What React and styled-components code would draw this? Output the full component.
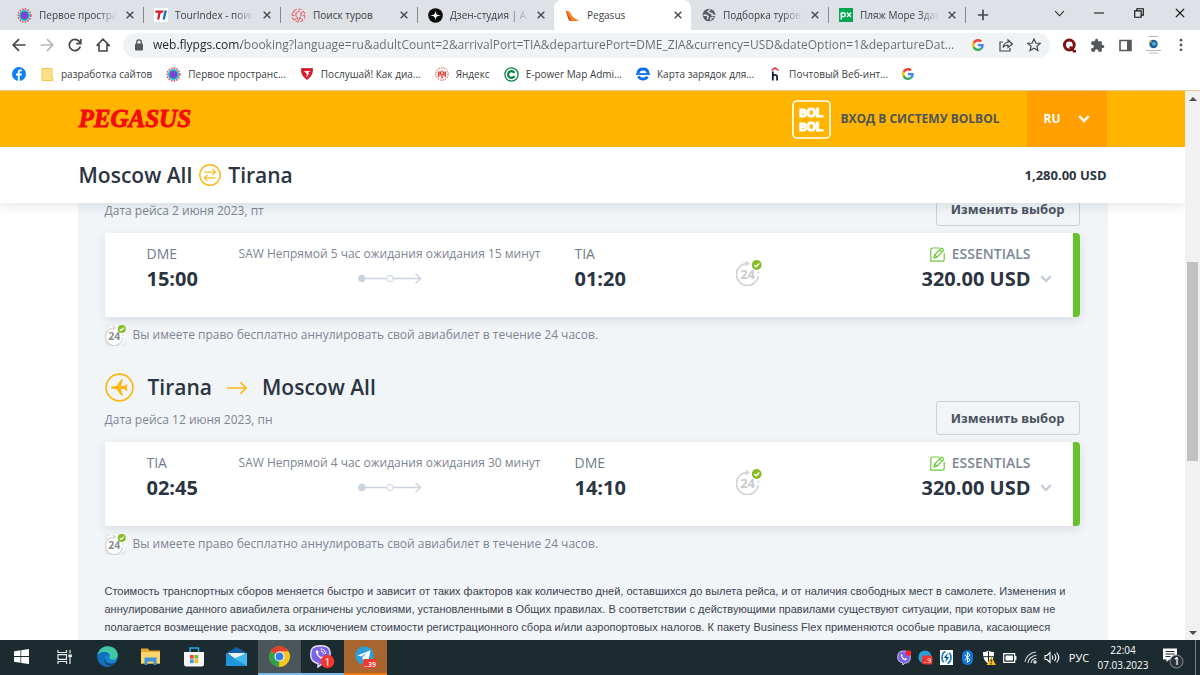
import React from "react";
import styled, { createGlobalStyle } from "styled-components";

const ui = '"Open Sans", "Noto Sans", sans-serif';
const site = '"Open Sans", "Noto Sans", sans-serif';

const GlobalStyle = createGlobalStyle`
  *, *::before, *::after { box-sizing: border-box; }
  html, body { margin: 0; height: 100%; overflow: hidden; }
  body { font-family: ${site}; background: #fff; color: #2b3542; }
  #root { height: 100%; }
  button, input, select { font: inherit; color: inherit; border: 0; background: none; padding: 0; margin: 0; }
  button { cursor: pointer; }
  a { color: inherit; text-decoration: none; }
  svg { display: block; flex: none; }
  h1, h2, p { margin: 0; }
`;

const Desktop = styled.div`
  display: flex;
  flex-direction: column;
  height: 100vh;
`;

/* ---------- browser frame ---------- */

const TabStrip = styled.div`
  display: flex;
  align-items: stretch;
  height: 30px;
  padding-left: 6px;
  background: #dee1e6;
  font: 10px/16px ${ui};
  color: #3c4043;
`;

const Tab = styled.div`
  display: flex;
  align-items: center;
  gap: 7px;
  flex: 0 1 137px;
  min-width: 0;
  padding: 0 7px 0 11px;
  border-radius: 8px 8px 0 0;
  background: ${(p) => (p.$active ? "#fff" : "transparent")};
  position: relative;
  &::after {
    content: "";
    position: absolute;
    right: -1px;
    top: 7px;
    width: 1px;
    height: 16px;
    background: ${(p) => (p.$divided ? "#84888d" : "transparent")};
  }
`;

const TabTitle = styled.span`
  flex: 1;
  min-width: 0;
  overflow: hidden;
  white-space: nowrap;
  mask-image: ${(p) => (p.$fade ? "linear-gradient(to right, #000 75%, transparent)" : "none")};
`;

const IconButton = styled.button`
  display: grid;
  place-items: center;
  flex: none;
  width: ${(p) => p.$w || 28}px;
  height: ${(p) => p.$h || 28}px;
  color: ${(p) => p.$color || "#45494d"};
`;

const WindowControls = styled.div`
  display: flex;
  margin-left: auto;
  height: 26px;
`;

const Toolbar = styled.div`
  display: flex;
  align-items: center;
  height: 30px;
  padding: 0 5px;
  background: #fff;
`;

const Omnibox = styled.label`
  display: flex;
  align-items: center;
  flex: 1;
  min-width: 0;
  height: 25px;
  margin: 0 5px 0 6px;
  padding: 0 2px 0 11px;
  gap: 9px;
  border-radius: 13px;
  background: #f0f3f5;
`;

const UrlInput = styled.input`
  flex: 1;
  min-width: 0;
  height: 20px;
  font: 12px/20px ${ui};
  outline: 0;
  text-overflow: ellipsis;
  color: transparent;
  background: linear-gradient(to right, #202124 88px, #676b70 88px);
  background-clip: text;
  -webkit-background-clip: text;
`;

const OmniboxActions = styled.div`
  display: flex;
`;

const Bookmarks = styled.nav`
  display: flex;
  align-items: center;
  height: 30px;
  padding: 0 12px 2px;
  gap: 14px;
  background: #fff;
  font: 10px/16px ${ui};
  color: #3c4043;
`;

const Bookmark = styled.a`
  display: flex;
  align-items: center;
  gap: 7px;
  white-space: nowrap;
`;

/* ---------- site ---------- */

const Viewport = styled.div`
  display: flex;
  flex: 1;
  min-height: 0;
  border-top: 1px solid #e3c98c;
`;

const Page = styled.div`
  flex: 1;
  min-width: 0;
  overflow: hidden;
`;

const StickyTop = styled.header`
  position: relative;
  z-index: 2;
  box-shadow: 0 2px 12px rgba(40, 60, 80, 0.14);
`;

const Container = styled.div`
  display: flex;
  align-items: center;
  width: 100%;
  max-width: 1028px;
  height: 56px;
  margin: 0 auto;
`;

const BrandBar = styled.div`
  background: #ffb400;
`;

const RouteBar = styled.div`
  background: #fff;
`;

const Brand = styled.a`
  font: italic 700 25px/30px "Liberation Serif", serif;
  color: #f40c0c;
  -webkit-text-stroke: 1px #f40c0c;
`;

const LoginLink = styled.a`
  display: flex;
  align-items: center;
  gap: 9px;
  margin-left: auto;
  font-size: 12px;
  line-height: 18px;
  font-weight: 700;
  color: #4d5357;
`;

const LanguageBox = styled.label`
  display: flex;
  align-items: center;
  justify-content: space-between;
  width: 80px;
  height: 56px;
  margin-left: 27px;
  padding: 0 17px;
  background: #ffa000;
  color: #fff;
`;

const LanguageSelect = styled.select`
  appearance: none;
  width: 24px;
  font-size: 12px;
  line-height: 18px;
  font-weight: 700;
  color: #fff;
  outline: 0;
`;

const Route = styled.h1`
  display: flex;
  align-items: center;
  gap: 7px;
  font-size: 21px;
  line-height: 28px;
  font-weight: 600;
  color: #2b3542;
`;

const Total = styled.strong`
  margin-left: auto;
  font-size: 13px;
  line-height: 20px;
  font-weight: 700;
`;

const Panel = styled.main`
  width: 100%;
  max-width: 1030px;
  margin: -11px auto 0;
  padding: 0 28px 24px 27px;
  background: #f1f5f8;
`;

const Leg = styled.section`
  display: flex;
  flex-direction: column;
  margin-bottom: 28px;
`;

const LegTop = styled.div`
  display: flex;
  align-items: flex-end;
  justify-content: space-between;
  margin-bottom: 7px;
`;

const LegTitle = styled.h2`
  display: flex;
  align-items: center;
  gap: 14px;
  height: 29px;
  margin-bottom: 8px;
  font-size: 21px;
  line-height: 29px;
  font-weight: 600;
`;

const LegDate = styled.p`
  padding-bottom: 5px;
  font-size: 12px;
  line-height: 20px;
  color: #7d8592;
`;

const ChangeButton = styled.button`
  height: 34px;
  padding: 0 14px;
  border: 1px solid #c9d1da;
  border-radius: 3px;
  font-family: "Noto Sans", "Open Sans", sans-serif;
  font-size: 13px;
  line-height: 20px;
  font-weight: 700;
  color: #4b545f;
`;

const Card = styled.article`
  display: grid;
  grid-template-columns: 88fr 340fr 161fr 337fr;
  height: 84px;
  padding: 11px 0 0 42px;
  border-right: 7px solid #66c32e;
  border-radius: 0 4px 4px 0;
  background: #fff;
  box-shadow: 0 3px 10px rgba(40, 60, 80, 0.12);
`;

const Airport = styled.div`
  font-size: 14px;
  line-height: 20px;
  color: #717b8a;
`;

const Time = styled.div`
  font-size: 20px;
  line-height: 30px;
  font-weight: 700;
  color: #2b3542;
`;

const Stops = styled.div`
  display: flex;
  flex-direction: column;
  align-items: center;
  gap: 9px;
  width: 310px;
  font-size: 12px;
  line-height: 20px;
  white-space: nowrap;
  color: #7d8592;
`;

const Fare = styled.div`
  display: flex;
  justify-content: space-between;
  padding-right: 21px;
`;

const Refund = styled.div`
  padding-top: 16px;
`;

const FarePrice = styled.div`
  display: flex;
  gap: 9px;
  text-align: right;
`;

const FareName = styled.div`
  display: flex;
  align-items: center;
  justify-content: flex-end;
  gap: 7px;
  font-size: 14px;
  line-height: 20px;
  font-weight: 600;
  color: #7c8695;
`;

const FareToggle = styled.button`
  align-self: flex-start;
  display: grid;
  place-items: center;
  width: 12px;
  height: 30px;
  margin-top: 20px;
  color: #c6ced9;
`;

const Note = styled.p`
  display: flex;
  align-items: center;
  gap: 7px;
  height: 20px;
  margin-top: 8px;
  font-size: 12px;
  line-height: 20px;
  color: #7d8592;
`;

const Terms = styled.p`
  font: 11px/18px "Liberation Sans", "Open Sans", sans-serif;
  white-space: nowrap;
  color: #3a434e;
`;

const Scrollbar = styled.div`
  display: grid;
  grid-template-rows: 15px 156fr 199fr 164fr 15px;
  justify-items: center;
  align-items: center;
  width: 15px;
  background: #f1f1f1;
`;

const Thumb = styled.div`
  grid-row: 3;
  width: 11px;
  height: 100%;
  background: #c1c1c1;
`;

const ScrollArrow = styled.div`
  grid-row: ${(p) => (p.$down ? 5 : 1)};
  border: 4px solid transparent;
  border-top: ${(p) => (p.$down ? "4px solid #505050" : "0")};
  border-bottom: ${(p) => (p.$down ? "0" : "4px solid #505050")};
`;

/* ---------- taskbar ---------- */

const Taskbar = styled.footer`
  display: flex;
  align-items: stretch;
  justify-content: space-between;
  height: 35px;
  flex: none;
  background: #1b2b30;
  color: #fff;
  font: 11px/16px ${ui};
`;

const TaskGroup = styled.div`
  display: flex;
`;

const TaskButton = styled.button`
  display: grid;
  place-items: center;
  width: 43px;
  background: ${(p) => p.$bg || "transparent"};
  border-bottom: 2px solid ${(p) => p.$line || "transparent"};
`;

const Tray = styled.div`
  display: flex;
  align-items: center;
  padding-right: 4px;
`;

const TrayButton = styled.button`
  display: grid;
  place-items: center;
  width: 21px;
  height: 35px;
`;

const Lang = styled.button`
  width: 34px;
  color: #fff;
`;

const Clock = styled.button`
  width: 54px;
  color: #fff;
  font-size: 10px;
  line-height: 15px;
  white-space: nowrap;
`;

const Notices = styled.button`
  display: grid;
  place-items: center;
  width: 46px;
  height: 35px;
  border-right: 1px solid #75808a;
`;

/* ---------- icons ---------- */

const Orbit = () => (
  <svg width="15" height="15" viewBox="0 0 15 15">
    <circle cx="7.5" cy="7.5" r="6.4" fill="#d9f3f2" stroke="#e5455f" strokeWidth="1.5" strokeDasharray="1.5 1.2" />
    <circle cx="7.5" cy="7.5" r="5.4" fill="#28b7bd" />
    <circle cx="7.5" cy="7.5" r="3.7" fill="#7a45d6" />
  </svg>
);

const TourIndex = () => (
  <svg width="14" height="14" viewBox="0 0 14 14">
    <rect width="14" height="14" fill="#fff" />
    <path d="M1.600 2.500h8l-.5 2.200H6.800L5.300 11.500H3L4.500 4.700H1.100z" fill="#d8182a" />
    <path d="M10.500 2.500h2.400l-2 9H8.500z" fill="#1574c4" />
  </svg>
);

const Tours = () => (
  <svg width="15" height="15" viewBox="0 0 15 15" fill="none" stroke="#ea646c" strokeWidth="1.100">
    <circle cx="7.500" cy="7.500" r="6.500" strokeDasharray="3 2" />
    <path d="M2 3l3 2.500L7.500 3 10 5.500 13 3M1 7l3.500 1M14 7l-3.500 1M3 12l3-2 1.500 3L9 10l3 2M5 5.500v3l2.500 2L10 8.500v-3" strokeDasharray="2.500 .7" />
  </svg>
);

const Zen = () => (
  <svg width="15" height="15" viewBox="0 0 15 15">
    <circle cx="7.500" cy="7.500" r="7.300" fill="#0b0b0b" />
    <path d="M7.500 2c.2 4 1.300 5.300 5.500 5.500C8.800 7.700 7.700 9 7.500 13 7.300 9 6.200 7.700 2 7.500 6.200 7.300 7.300 6 7.500 2z" fill="#fff" />
  </svg>
);

const Wing = () => (
  <svg width="15" height="15" viewBox="0 0 15 15">
    <path d="M.5 2.200C2 3 4 2.800 5 4.500c1.500 2.700 3 6 9.500 8-3.500.9-7.500 1-9.500.3C2.500 11 2 5.500.5 2.200z" fill="#f58220" />
    <path d="M.5 2.200C3 5 3.500 9 6.500 13c-1 0-2-.2-2.500-1C2.500 9.500 2 5 .5 2.200z" fill="#c4461c" />
  </svg>
);

const Globe = () => (
  <svg width="14" height="14" viewBox="0 0 14 14">
    <circle cx="7" cy="7" r="6.300" fill="#5a5e63" />
    <path d="M1.500 7.300h3l1.700 1.500-1 2.500M8.500 1.500L6 3.300l1.500 1.500 2.500.7v1.700h3M8.500 12.500l.5-2.500 2.500-.8" stroke="#dee1e6" strokeWidth="1.400" fill="none" />
  </svg>
);

const Px = () => (
  <svg width="14" height="14" viewBox="0 0 14 14">
    <rect width="14" height="14" fill="#00a651" />
    <g fill="none" stroke="#fff" strokeWidth="1.400">
      <path d="M2.300 11.500V4.500" />
      <circle cx="4.300" cy="6.700" r="1.900" />
      <path d="M8 4.500l4 4.600M12 4.500L8 9.100" />
    </g>
  </svg>
);

const GoogleG = () => (
  <svg width="12" height="12" viewBox="0 0 48 48">
    <path fill="#EA4335" d="M24 9.500c3.540 0 6.710 1.220 9.210 3.600l6.850-6.850C35.900 2.380 30.470 0 24 0 14.620 0 6.510 5.380 2.560 13.220l7.980 6.190C12.430 13.720 17.740 9.500 24 9.500z" />
    <path fill="#4285F4" d="M46.980 24.550c0-1.570-.15-3.090-.38-4.550H24v9.020h12.940c-.58 2.960-2.260 5.480-4.780 7.180l7.730 6c4.510-4.180 7.090-10.360 7.090-17.650z" />
    <path fill="#FBBC05" d="M10.530 28.590c-.48-1.450-.76-2.990-.76-4.590s.27-3.140.76-4.590l-7.980-6.190C.92 16.460 0 20.120 0 24c0 3.880.92 7.540 2.560 10.780l7.970-6.190z" />
    <path fill="#34A853" d="M24 48c6.480 0 11.930-2.130 15.890-5.810l-7.730-6c-2.150 1.450-4.920 2.300-8.160 2.300-6.260 0-11.570-4.220-13.470-9.910l-7.980 6.190C6.510 42.620 14.620 48 24 48z" />
  </svg>
);

const Cross = ({ size = 8, weight = 1.4 }) => (
  <svg width={size} height={size} viewBox="0 0 8 8" stroke="currentColor" strokeWidth={weight}>
    <path d="M.7.7l6.600 6.600M7.300.7L.7 7.300" />
  </svg>
);

const Line = ({ size = 14, d, w = 1.5 }) => (
  <svg width={size} height={size} viewBox="0 0 14 14" fill="none" stroke="currentColor" strokeWidth={w}>
    <path d={d} />
  </svg>
);

const Facebook = () => (
  <svg width="14" height="14" viewBox="0 0 14 14">
    <circle cx="7" cy="7" r="7" fill="#0f7ff2" />
    <path d="M7.700 14V8.500h1.900l.3-2H7.700V5.300c0-.7.400-1.100 1.100-1.100h1.100V2.500C8 2.200 5.800 2.300 5.800 5v1.500H4v2h1.800V14z" fill="#fff" />
  </svg>
);

const Folder = () => (
  <svg width="14" height="14" viewBox="0 0 14 14">
    <path d="M2 1.500h10v9h1v3H2z" fill="#ffe08a" stroke="#f2c752" />
  </svg>
);

const Shield = () => (
  <svg width="14" height="14" viewBox="0 0 14 14">
    <path d="M1.500 1.500h11c.5 4.500-1.500 8.500-5.500 11-4-2.500-6-6.500-5.500-11z" fill="#e3172b" stroke="#8f1622" strokeWidth=".6" />
    <path d="M4 4h6.500L8 5.700l1 .5-2.500 4.500.2-4z" fill="#fff" />
  </svg>
);

const RedStamp = () => (
  <svg width="14" height="14" viewBox="0 0 14 14" fill="none" stroke="#e1372c">
    <circle cx="7" cy="7" r="6.200" strokeDasharray="1.500 1" />
    <path d="M3.700 4.500v5.500M10.300 4.500v5.500M7 3.500v2M7 6.500v5M5.300 4.500v4M8.700 4.500v4" strokeWidth="1.300" />
  </svg>
);

const GreenC = () => (
  <svg width="15" height="15" viewBox="0 0 15 15" fill="none" stroke="#0b8548">
    <circle cx="7.500" cy="7.500" r="6.600" strokeWidth="1.300" />
    <path d="M10.300 5.800A3.300 3.300 0 1 0 10.300 9.200" strokeWidth="2.300" />
  </svg>
);

const BlueE = () => (
  <svg width="14" height="14" viewBox="0 0 14 14" fill="none" stroke="#0c6fe8" strokeWidth="2.800">
    <path d="M2 6.200C2.300 3.500 4.300 2 7 2s4.800 1.600 5 4.200M2.400 9.300c.9 1.700 2.500 2.700 4.600 2.700 1.900 0 3.500-.8 4.500-2.300" />
    <path d="M0 7h14" strokeWidth="1.800" />
  </svg>
);

const HMail = () => (
  <svg width="14" height="14" viewBox="0 0 14 14" fill="none" strokeWidth="1.800">
    <path d="M3.500 3.300L7 1l3.500 2.300" stroke="#e8384f" strokeWidth="1.500" />
    <path d="M4.800 4.500v9M4.800 9.500c.4-2 4.300-2.300 4.300.3v3.700" stroke="#151c3d" />
  </svg>
);

const Puzzle = () => (
  <svg width="15" height="15" viewBox="0 0 24 24" fill="#54585d">
    <path d="M20.500 11H19V7c0-1.100-.9-2-2-2h-4V3.500a2.500 2.500 0 0 0-5 0V5H4a2 2 0 0 0-2 2v3.800h1.500a2.700 2.700 0 0 1 0 5.400H2V20c0 1.100.9 2 2 2h3.800v-1.500a2.700 2.700 0 0 1 5.400 0V22H17a2 2 0 0 0 2-2v-4h1.500a2.500 2.500 0 0 0 0-5z" />
  </svg>
);

const Quill = () => (
  <svg width="15" height="15" viewBox="0 0 15 15" fill="none" stroke="#7d1113" strokeWidth="3">
    <circle cx="7.300" cy="7" r="4.900" />
    <path d="M8 8.500l4 4.700h2" strokeWidth="2.400" />
  </svg>
);

const Profile = () => (
  <svg width="17" height="18" viewBox="0 0 17 18">
    <path d="M4 .5h9M1 14.500h15M4 17h9" stroke="#b4b8bc" />
    <circle cx="8.500" cy="8" r="4.200" fill="#1b5f96" />
    <circle cx="9" cy="7.700" r="2" fill="#48b5df" />
    <circle cx="5.500" cy="5.500" r="1.200" fill="#d4a25f" />
  </svg>
);

const BolBol = () => (
  <svg width="39" height="39" viewBox="0 0 39 39" fill="none">
    <rect x="1" y="1" width="37" height="37" rx="4" stroke="#fff" strokeWidth="1.600" />
    <g fill="#fff" stroke="#fff" strokeWidth="1.200" strokeLinejoin="round" fontFamily="Liberation Sans" fontWeight="700" fontSize="12" textAnchor="middle">
      <text x="19.500" y="17">
        <tspan fontSize="10">B</tspan>OL
      </text>
      <text x="19.500" y="31">
        <tspan fontSize="10">B</tspan>OL
      </text>
    </g>
  </svg>
);

const Chevron = () => (
  <svg width="12" height="8" viewBox="0 0 12 8" fill="none" stroke="currentColor" strokeWidth="2.400">
    <path d="M1.300 1.200L6 6l4.700-4.800" />
  </svg>
);

const RoundTrip = () => (
  <svg width="22" height="22" viewBox="0 0 22 22" fill="none" stroke="#fdb716" strokeWidth="1.200">
    <circle cx="11" cy="11" r="10.200" strokeWidth="1.400" />
    <path d="M5.500 8.200h11M13.500 5.200l3 3-3 3M16.500 13.800h-11M8.500 10.800l-3 3 3 3" />
  </svg>
);

const PlaneBadge = () => (
  <svg width="29" height="29" viewBox="0 0 29 29">
    <circle cx="14.500" cy="14.500" r="13.400" fill="none" stroke="#fdb716" strokeWidth="1.700" />
    <path d="M6 14.500c0-.8 1-1.300 2.300-1.300l3.100-.2L16 6.500h2L16 13h3.200l1.500-1.600h1.800l-.8 3.100.8 3.100h-1.800L19.200 16H16l2 6.500h-2L11.400 16l-3.100-.2c-1.300 0-2.300-.5-2.300-1.300z" fill="#fdb716" />
  </svg>
);

const LongArrow = () => (
  <svg width="22" height="14" viewBox="0 0 22 14" fill="none" stroke="#fdb716" strokeWidth="1.700">
    <path d="M1 7h19M14.500 1.300L20.200 7l-5.700 5.700" />
  </svg>
);

const StopLine = () => (
  <svg width="64" height="11" viewBox="0 0 64 11" fill="none" stroke="#cbd3df">
    <circle cx="3.800" cy="5.500" r="3.700" fill="#cbd3df" stroke="none" />
    <path d="M4 5.500h24.500M35 5.500h28" strokeWidth="1.300" />
    <circle cx="32" cy="5.500" r="3.100" />
    <path d="M57.500.8l5 4.700-5 4.700" strokeWidth="1.400" />
  </svg>
);

const Refund24 = ({ size = 26, plate = false }) => (
  <svg width={size} height={size} viewBox="0 0 26 26" fill="none">
    {plate && <rect width="26" height="26" fill="#e9ecee" />}
    {plate && <circle cx="13" cy="13" r="13" fill="#fff" />}
    <path d="M11.500 3.500A11 11 0 1 0 22.300 16M22.500 13.500a6 6 0 0 0-.2-2" stroke="#cfd1d3" strokeWidth="1.600" />
    <path d="M9.500 1.300l3.300 2.200-3 2.300" stroke="#cfd1d3" strokeWidth="1.400" />
    <text x="11.600" y="18.800" textAnchor="middle" fontFamily="Open Sans" fontSize="13" fontWeight="700" fill={plate ? "#8b8d90" : "#c9cbce"}>24</text>
    <circle cx="20.700" cy="5" r="4.900" fill="#85bd25" />
    <path d="M18.300 5l1.800 1.800 3.200-3.400" stroke="#fff" strokeWidth="1.400" />
  </svg>
);

const EditBox = () => (
  <svg width="15" height="15" viewBox="0 0 15 15" fill="none" stroke="#6bc93c" strokeWidth="1.200">
    <path d="M9.500 1H2.500A1.700 1.700 0 0 0 .8 2.700v11.500h11.500a1.900 1.900 0 0 0 1.900-1.900V6" />
    <path d="M4 11l.7-3.200 6.200-6.300c1.300-.9 3.200 1 2.300 2.300L7 10.200zM9.600 2.800l2.400 2.400M4.700 7.800L7 10.200" />
  </svg>
);

const Windows = () => (
  <svg width="15" height="15" viewBox="0 0 15 15" fill="#fff">
    <path d="M0 2.200l6.500-.9V7H0zM7.200 1.200L15 0v7H7.200zM0 7.900h6.500v5.800L0 12.800zM7.200 7.900H15V15l-7.800-1.100z" />
  </svg>
);

const TaskView = () => (
  <svg width="15" height="14" viewBox="0 0 15 14" fill="none" stroke="#e9ecee" strokeWidth="1.200">
    <path d="M1 0v2.500h8.500V0M1 14v-2.500h8.500V14M1 4.700h8.500v4.600H1zM13 0v3.500M13 7v7" />
    <path d="M12 5h2.300v1.500H12z" fill="#e9ecee" />
  </svg>
);

const Edge = () => (
  <svg width="21" height="21" viewBox="0 0 21 21">
    <circle cx="10.500" cy="10.500" r="10.300" fill="#1583cf" />
    <path d="M.5 9C2 3 6 .2 10.500.2c6.500 0 10.300 4.300 10.300 8.500 0 3.500-2.600 5-5 5-2.300 0-3.800-1-3.200-2.200C15 7 6 2.800.5 9z" fill="#3fc8a4" />
    <path d="M.5 9C4 5 11.500 5 12.800 9.500 9 7.500 6 11 7 14.500c1 3.500 4 5.500 7.500 5.500C7 22.500-.5 17.500.5 9z" fill="#1170bd" />
    <path d="M8 12c-.5 4.500 5 7.500 11 4-3 5-9.500 4.800-11.500 0-.6-1.500-.3-3 .5-4z" fill="#17466f" />
  </svg>
);

const Explorer = () => (
  <svg width="19" height="17" viewBox="0 0 19 17">
    <path d="M0 .5h7l1.500 2H19v13H0z" fill="#e4a72f" />
    <path d="M0 4h19v11.500H0z" fill="#fcd66c" />
    <path d="M3.500 17V9.500h12V17h-3v-3.500h-6V17z" fill="#3c95dc" />
  </svg>
);

const Store = () => (
  <svg width="20" height="20" viewBox="0 0 20 20">
    <path d="M6 5.500V1h8.500v4.500" fill="none" stroke="#28a8e2" strokeWidth="1.600" />
    <path d="M0 5h20v12a2.500 2.500 0 0 1-2.500 2.500h-15A2.500 2.500 0 0 1 0 17z" fill="#f5f5f5" />
    <path d="M6 8h3.700v3.700H6z" fill="#e84b2c" />
    <path d="M10.500 8h3.700v3.700h-3.700z" fill="#7cb82f" />
    <path d="M6 12.400h3.700v3.700H6z" fill="#2f9fe0" />
    <path d="M10.500 12.400h3.700v3.700h-3.700z" fill="#f7b61c" />
  </svg>
);

const Mail = () => (
  <svg width="21" height="19" viewBox="0 0 21 19">
    <path d="M0 6l10.500-6L21 6v13H0z" fill="#105fa8" />
    <path d="M1.500 6h18l-9 7z" fill="#eef3f7" />
    <path d="M0 6l21 13H0z" fill="#2196dd" />
    <path d="M21 6v13L8 11.500z" fill="#41baf0" />
  </svg>
);

const Chrome = () => (
  <svg width="21" height="21" viewBox="0 0 21 21">
    <circle cx="10.500" cy="10.500" r="10.300" fill="#f7c51e" />
    <path d="M10.500 10.500L1.600 5.300a10.300 10.300 0 0 1 17.800 0z" fill="#e2402f" />
    <path d="M10.500 10.500L1.600 5.300A10.300 10.300 0 0 0 10 20.800l4.700-7.900z" fill="#2da14d" />
    <path d="M10.500 10.500V5.300h8.900a10.300 10.300 0 0 1-9.400 15.500z" fill="#f7c51e" />
    <circle cx="10.500" cy="10.500" r="5" fill="#fff" />
    <circle cx="10.500" cy="10.500" r="3.900" fill="#3a7be8" />
  </svg>
);

const Viber = () => (
  <svg width="25" height="24" viewBox="0 0 25 24">
    <path d="M10.500.8c7 0 9.700 2.200 9.700 9s-2.700 9-8 9L8 22v-3.500c-5-.8-7.300-3-7.300-8.700C.7 3 3.500.8 10.500.8z" fill="#7864e8" stroke="#e9e4fb" strokeWidth="1.400" />
    <path d="M6 5.500c.9-.9 2 .2 2.600 1.400.3.700-.8 1.200-.6 1.900.5 1.500 1.800 2.700 3.200 3.300.8.300 1.200-1 2-.7 1.300.5 2.400 1.500 1.500 2.500-2.500 2.400-10-4.500-8.700-8.400z" fill="#fff" />
    <path d="M10.500 4c3.200 0 5 1.800 5 5M10.800 6.200c1.700.1 2.600 1 2.600 2.600" fill="none" stroke="#fff" />
    <circle cx="17.500" cy="16.500" r="6.800" fill="#f5352c" />
    <text x="17.500" y="20.500" textAnchor="middle" fontSize="11" fontFamily="Open Sans" fill="#fff">1</text>
  </svg>
);

const Telegram = () => (
  <svg width="24" height="22" viewBox="0 0 24 22">
    <circle cx="10.500" cy="9.500" r="9.300" fill="#2a9fd8" />
    <path d="M3.500 9.500l13-5.200-2.200 11-3.600-2.700-1.900 1.900-.4-3.200 5-4.700-6.300 4z" fill="#fff" />
    <rect x="9" y="13" width="14" height="9" rx="2" fill="#f0382f" />
    <text x="16" y="20.500" textAnchor="middle" fontSize="7" fontFamily="Open Sans" fontWeight="600" fill="#fff">..39</text>
  </svg>
);

const TrayViber = () => (
  <svg width="15" height="15" viewBox="0 0 15 15">
    <path d="M7 1c4.500 0 6.300 1.500 6.300 6s-1.800 6-5 6L5.500 15v-2.300C2 12 .7 10.500.7 7 .7 2.500 2.500 1 7 1z" fill="#7b63e6" stroke="#e5ddfa" strokeWidth=".8" />
    <path d="M4 4.500c1-.8 1.800.8 1.500 1.300-.8 1 1.800 3.300 2.800 2.600.7-.4 2 .9 1.200 1.500C7.500 11.500 3 7 4 4.500z" fill="#fff" />
    <circle cx="11.500" cy="3" r="2.800" fill="#fb1f24" />
  </svg>
);

const TrayTelegram = () => (
  <svg width="15" height="15" viewBox="0 0 15 15">
    <circle cx="7" cy="7" r="6.600" fill="#2d9fd6" />
    <rect x="4" y="5.500" width="10.500" height="9" rx="2" fill="#e8362f" />
    <text x="9.300" y="12.800" textAnchor="middle" fontSize="7" fontFamily="Open Sans" fill="#fff">..9</text>
  </svg>
);

const Bolt = () => (
  <svg width="13" height="15" viewBox="0 0 13 15">
    <rect width="13" height="15" fill="#fff" />
    <path d="M5.500 1.500C1.500 3 .8 10 4 12M7.500 13.500c4-1.500 4.700-8.500 1.500-10.500" fill="none" stroke="#1d7ec4" strokeWidth="1.600" />
    <path d="M8 2.500L3.500 8h2.700L5 12.500 9.500 7H6.800z" fill="#1264a8" />
  </svg>
);

const Bluetooth = () => (
  <svg width="11" height="15" viewBox="0 0 11 15">
    <rect width="11" height="15" rx="5.500" fill="#1277d8" />
    <path d="M2.800 4.800l5.200 5-2.600 2.500v-10L8 4.900l-5.200 5" fill="none" stroke="#fff" />
  </svg>
);

const Defender = () => (
  <svg width="14" height="15" viewBox="0 0 14 15">
    <path d="M6.500.5c2 1.200 3.500 1.500 5.500 1.500 0 6-1 9-5.500 11.500C2 11 1 8 1 2 3 2 4.500 1.700 6.500.5z" fill="#fff" />
    <path d="M6.500 1v12M1 6.700h11" stroke="#1b2b30" />
    <path d="M9.200 6.500L14 15H4.500z" fill="#f6b71c" />
    <path d="M9.200 9.300v3M9.200 13.100v1.200" stroke="#222" />
  </svg>
);

const Battery = () => (
  <svg width="14" height="10" viewBox="0 0 14 10">
    <path d="M.7.700h11v8.600H.7zM12.800 3v4" fill="none" stroke="#fff" strokeWidth="1.200" />
    <path d="M2.500 2.500h7.500v5H2.500z" fill="#fff" />
  </svg>
);

const Wifi = () => (
  <svg width="13" height="13" viewBox="0 0 13 13" fill="none" stroke="#d6dadd" strokeWidth="1.100">
    <path d="M1 11C1.500 6 6 1.500 12 1M4 12C4.200 8 8 4.500 12.500 4.300M7 12c.3-2.500 2.500-4.500 5.500-4.800" />
    <circle cx="11" cy="11" r="1.200" fill="#d6dadd" />
  </svg>
);

const Speaker = () => (
  <svg width="16" height="13" viewBox="0 0 16 13" fill="none" stroke="#fff" strokeWidth="1.100">
    <path d="M1 4.500h2L6 1.500v10l-3-3H1zM8 4.500c1 1.200 1 2.800 0 4M10.300 3c1.800 2 1.800 5 0 7M12.600 1.500c2.600 3 2.600 7 0 10" />
  </svg>
);

const NoticeIcon = () => (
  <svg width="22" height="22" viewBox="0 0 22 22">
    <path d="M1 1.500h14v11H7.500L4.500 15v-2.500H1z" fill="#fff" />
    <path d="M3.500 4.500h9M3.500 7h9M3.500 9.500h5" stroke="#1b2b30" />
    <circle cx="14.500" cy="14.500" r="6.500" fill="#2c3338" stroke="#8b9196" />
    <text x="14.500" y="18.200" textAnchor="middle" fontSize="10" fontFamily="Open Sans" fontWeight="600" fill="#fff">1</text>
  </svg>
);

/* ---------- data ---------- */

const tabs = [
  { title: "Первое пространство", icon: <Orbit />, divided: true, fade: true },
  { title: "TourIndex - поиск", icon: <TourIndex />, divided: true, fade: true },
  { title: "Поиск туров", icon: <Tours />, divided: true },
  { title: "Дзен-студия | Але", icon: <Zen />, fade: true },
  { title: "Pegasus", icon: <Wing />, active: true },
  { title: "Подборка туров", icon: <Globe />, divided: true, fade: true },
  { title: "Пляж Море Здани", icon: <Px />, divided: true, fade: true },
];

const bookmarks = [
  { icon: <Facebook />, label: "Facebook", bare: true },
  { icon: <Folder />, label: "разработка сайтов" },
  { icon: <Orbit />, label: "Первое пространс..." },
  { icon: <Shield />, label: "Послушай! Как диа..." },
  { icon: <RedStamp />, label: "Яндекс" },
  { icon: <GreenC />, label: "E-power Map Admi..." },
  { icon: <BlueE />, label: "Карта зарядок для..." },
  { icon: <HMail />, label: "Почтовый Веб-инт..." },
  { icon: <GoogleG />, label: "Google", bare: true },
];

const legs = [
  { date: "Дата рейса 2 июня 2023, пт", from: "DME", dep: "15:00", via: "SAW Непрямой 5 час ожидания ожидания 15 минут", to: "TIA", arr: "01:20" },
  { title: ["Tirana", "Moscow All"], date: "Дата рейса 12 июня 2023, пн", from: "TIA", dep: "02:45", via: "SAW Непрямой 4 час ожидания ожидания 30 минут", to: "DME", arr: "14:10" },
];

const url =
  "web.flypgs.com/booking?language=ru&adultCount=2&arrivalPort=TIA&departurePort=DME_ZIA&currency=USD&dateOption=1&departureDate...";

function FlightLeg({ leg }) {
  return (
    <Leg>
      <LegTop>
        <div>
          {leg.title && (
            <LegTitle>
              <PlaneBadge />
              <span>{leg.title[0]}</span>
              <LongArrow />
              <span>{leg.title[1]}</span>
            </LegTitle>
          )}
          <LegDate>{leg.date}</LegDate>
        </div>
        <ChangeButton>Изменить выбор</ChangeButton>
      </LegTop>
      <Card>
        <div>
          <Airport>{leg.from}</Airport>
          <Time>{leg.dep}</Time>
        </div>
        <Stops>
          {leg.via}
          <StopLine />
        </Stops>
        <div>
          <Airport>{leg.to}</Airport>
          <Time>{leg.arr}</Time>
        </div>
        <Fare>
          <Refund>
            <Refund24 />
          </Refund>
          <FarePrice>
            <div>
              <FareName>
                <EditBox />
                ESSENTIALS
              </FareName>
              <Time>320.00 USD</Time>
            </div>
            <FareToggle aria-label="Подробнее">
              <Chevron />
            </FareToggle>
          </FarePrice>
        </Fare>
      </Card>
      <Note>
        <Refund24 size={21} plate />
        Вы имеете право бесплатно аннулировать свой авиабилет в течение 24 часов.
      </Note>
    </Leg>
  );
}

export default function App() {
  return (
    <Desktop>
      <GlobalStyle />
      <TabStrip>
        {tabs.map((t) => (
          <Tab key={t.title} $active={t.active} $divided={t.divided}>
            {t.icon}
            <TabTitle $fade={t.fade}>{t.title}</TabTitle>
            <IconButton $w={12} $h={12} aria-label="Закрыть вкладку">
              <Cross />
            </IconButton>
          </Tab>
        ))}
        <IconButton $w={36} $h={30} aria-label="Новая вкладка">
          <Line size={12} w={2} d="M7 1v12M1 7h12" />
        </IconButton>
        <WindowControls>
          <IconButton $w={40} $h={26} $color="#222" aria-label="Поиск вкладок"><Line size={11} w={1.3} d="M1.500 4l5.500 6 5.500-6" /></IconButton>
          <IconButton $w={40} $h={26} $color="#111" aria-label="Свернуть"><Line size={10} d="M0 7h14" /></IconButton>
          <IconButton $w={40} $h={26} $color="#111" aria-label="Восстановить"><Line size={10} w={1.6} d="M1 4h9v9H1zM4 4V1h9v9h-3" /></IconButton>
          <IconButton $w={41} $h={26} $color="#111" aria-label="Закрыть"><Cross size={10} weight={1} /></IconButton>
        </WindowControls>
      </TabStrip>
      <Toolbar>
        <IconButton aria-label="Назад"><Line w={1.7} d="M13.500 7H1.500M7 1.200L1.200 7 7 12.800" /></IconButton>
        <IconButton $color="#b5b8bb" aria-label="Вперёд"><Line w={1.7} d="M.5 7h12M7 1.200L12.800 7 7 12.800" /></IconButton>
        <IconButton aria-label="Обновить"><Line w={1.7} d="M12.300 8.500A5.600 5.600 0 1 1 11 3.200L12.500 5M12.800 1v4.600H8.200" /></IconButton>
        <IconButton aria-label="Домой"><Line w={1.6} d="M3 6v7h8V6M.7 7.500L7 1.200l6.300 6.300H11M3 7.500H.7" /></IconButton>
        <Omnibox>
          <svg width="10" height="12" viewBox="0 0 10 12">
            <rect x="1" y="4.500" width="8" height="7" rx="1" fill="#54585d" />
            <path d="M2.800 5V3a2.200 2.200 0 0 1 4.400 0v2" fill="none" stroke="#54585d" strokeWidth="1.300" />
          </svg>
          <UrlInput aria-label="Адресная строка" defaultValue={url} />
          <OmniboxActions>
            <IconButton aria-label="Google"><GoogleG /></IconButton>
            <IconButton aria-label="Поделиться"><Line w={1.2} d="M4 4H1v9h10v-3M4 9.500C4.500 6 6 4.500 9 4.500V2l4.300 4L9 9.500V7.200C6.500 7 5 8 4 9.500z" /></IconButton>
            <IconButton aria-label="В закладки"><Line w={1.2} d="M7 1l1.800 4 4.400.4-3.300 2.900 1 4.300L7 10.300l-3.900 2.300 1-4.300L.8 5.400 5.200 5z" /></IconButton>
          </OmniboxActions>
        </Omnibox>
        <IconButton aria-label="Quora"><Quill /></IconButton>
        <IconButton aria-label="Расширения"><Puzzle /></IconButton>
        <IconButton aria-label="Боковая панель">
          <svg width="13" height="13" viewBox="0 0 13 13"><path d="M1 1.500h11v10H1z" fill="none" stroke="#54585d" strokeWidth="1.600" /><path d="M8 1.500h4v10H8z" fill="#54585d" /></svg>
        </IconButton>
        <IconButton aria-label="Профиль"><Profile /></IconButton>
        <IconButton aria-label="Меню">
          <svg width="4" height="14" viewBox="0 0 4 14" fill="#54585d"><circle cx="2" cy="2.200" r="1.400" /><circle cx="2" cy="7" r="1.400" /><circle cx="2" cy="11.800" r="1.400" /></svg>
        </IconButton>
      </Toolbar>
      <Bookmarks>
        {bookmarks.map((b) => (
          <Bookmark key={b.label} href="#" aria-label={b.label}>
            {b.icon}
            {!b.bare && b.label}
          </Bookmark>
        ))}
      </Bookmarks>
      <Viewport>
        <Page>
          <StickyTop>
            <BrandBar>
              <Container>
                <Brand href="#">PEGASUS</Brand>
                <LoginLink href="#">
                  <BolBol />
                  ВХОД В СИСТЕМУ BOLBOL
                </LoginLink>
                <LanguageBox>
                  <LanguageSelect aria-label="Язык" defaultValue="RU">
                    <option>RU</option>
                    <option>EN</option>
                  </LanguageSelect>
                  <Chevron />
                </LanguageBox>
              </Container>
            </BrandBar>
            <RouteBar>
              <Container>
                <Route>
                  <span>Moscow All</span>
                  <RoundTrip />
                  <span>Tirana</span>
                </Route>
                <Total>1,280.00 USD</Total>
              </Container>
            </RouteBar>
          </StickyTop>
          <Panel>
            {legs.map((leg) => (
              <FlightLeg key={leg.date} leg={leg} />
            ))}
            <Terms>
              Стоимость транспортных сборов меняется быстро и зависит от таких факторов как количество дней, оставшихся до вылета рейса, и от наличия свободных мест в самолете. Изменения и
              <br />
              аннулирование данного авиабилета ограничены условиями, установленными в Общих правилах. В соответствии с действующими правилами существуют ситуации, при которых вам не
              <br />
              полагается возмещение расходов, за исключением стоимости регистрационного сбора и/или аэропортовых налогов. К пакету Business Flex применяются особые правила, касающиеся
            </Terms>
          </Panel>
        </Page>
        <Scrollbar aria-hidden="true">
          <ScrollArrow />
          <Thumb />
          <ScrollArrow $down />
        </Scrollbar>
      </Viewport>
      <Taskbar>
        <TaskGroup>
          <TaskButton aria-label="Пуск"><Windows /></TaskButton>
          <TaskButton aria-label="Представление задач"><TaskView /></TaskButton>
          <TaskButton aria-label="Edge"><Edge /></TaskButton>
          <TaskButton aria-label="Проводник"><Explorer /></TaskButton>
          <TaskButton aria-label="Магазин"><Store /></TaskButton>
          <TaskButton aria-label="Почта"><Mail /></TaskButton>
          <TaskButton aria-label="Chrome" $bg="#4a5659" $line="#76b9ed"><Chrome /></TaskButton>
          <TaskButton aria-label="Viber" $line="#76b9ed"><Viber /></TaskButton>
          <TaskButton aria-label="Telegram" $bg="#a9652f" $line="#f5760a"><Telegram /></TaskButton>
        </TaskGroup>
        <Tray>
          <TrayButton aria-label="Viber"><TrayViber /></TrayButton>
          <TrayButton aria-label="Telegram"><TrayTelegram /></TrayButton>
          <TrayButton aria-label="Питание"><Bolt /></TrayButton>
          <TrayButton aria-label="Bluetooth"><Bluetooth /></TrayButton>
          <TrayButton aria-label="Безопасность"><Defender /></TrayButton>
          <TrayButton aria-label="Батарея"><Battery /></TrayButton>
          <TrayButton aria-label="Сеть"><Wifi /></TrayButton>
          <TrayButton aria-label="Звук"><Speaker /></TrayButton>
          <Lang>РУС</Lang>
          <Clock>22:04<br />07.03.2023</Clock>
          <Notices aria-label="Уведомления"><NoticeIcon /></Notices>
        </Tray>
      </Taskbar>
    </Desktop>
  );
}
